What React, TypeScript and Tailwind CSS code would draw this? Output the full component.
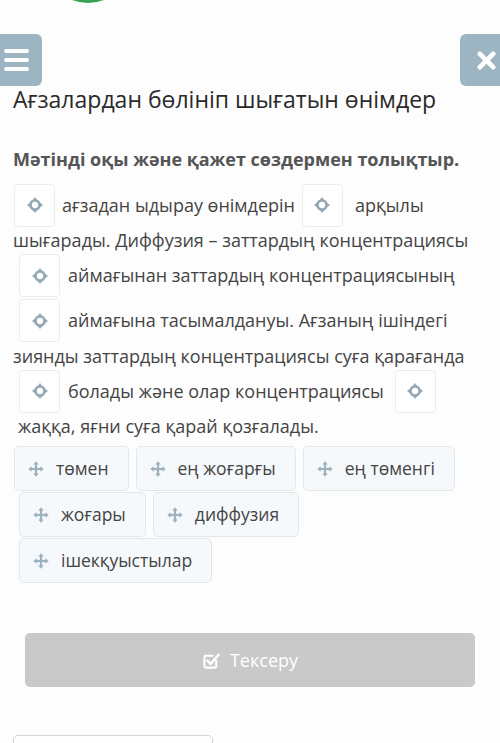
const font = { fontFamily: '"Open Sans", "Noto Sans", sans-serif' };

const DropIcon = () => (
  <svg width="18" height="18" viewBox="0 0 16 16" fill="#95a9b5">
    <circle cx="8" cy="8" r="4" fill="none" stroke="#95a9b5" strokeWidth="2.4" />
    <polygon points="8,0.8 10.2,3.8 5.8,3.8" />
    <polygon points="8,15.2 10.2,12.2 5.8,12.2" />
    <polygon points="0.8,8 3.8,5.8 3.8,10.2" />
    <polygon points="15.2,8 12.2,5.8 12.2,10.2" />
  </svg>
);

const MoveIcon = () => (
  <svg width="16" height="16" viewBox="0 0 16 16" fill="#9cb1be">
    <rect x="6.9" y="3" width="2.2" height="10" />
    <rect x="3" y="6.9" width="10" height="2.2" />
    <polygon points="8,0.3 10.8,3.6 5.2,3.6" />
    <polygon points="8,15.7 10.8,12.4 5.2,12.4" />
    <polygon points="0.3,8 3.6,5.2 3.6,10.8" />
    <polygon points="15.7,8 12.4,5.2 12.4,10.8" />
  </svg>
);

const Slot = () => (
  <span className="inline-flex w-[41px] h-[43px] shrink-0 items-center justify-center rounded-[4px] border border-[#ececec] bg-white">
    <DropIcon />
  </span>
);

const Chip = ({ label }: { label: string }) => (
  <div className="flex h-[45px] items-center gap-[12px] rounded-[5px] border border-[#e1e8ec] bg-[#f6f9fb] pl-[13px] pr-[19px] text-[17.5px] text-[#444]">
    <MoveIcon />
    <span>{label}</span>
  </div>
);

export default function App() {
  return (
    <div className="relative min-h-[743px] w-[500px] overflow-hidden bg-[#fdfdfd]" style={font}>
      <div className="absolute left-[44px] top-[-85px] h-[88px] w-[88px] rounded-full bg-[#37a357]" />

      <div className="h-[34px]" />
      <div className="flex h-[52px] items-start justify-between">
        <div className="-ml-2 flex h-[52px] w-[50px] items-center justify-start rounded-[6px] bg-[#9db4c2] pl-[12px]">
          <div className="flex flex-col gap-[5px]">
            <span className="block h-[4px] w-[25px] rounded-sm bg-white" />
            <span className="block h-[4px] w-[25px] rounded-sm bg-white" />
            <span className="block h-[4px] w-[25px] rounded-sm bg-white" />
          </div>
        </div>
        <div className="-mr-2 flex h-[52px] w-[48px] items-center justify-start rounded-[6px] bg-[#9db4c2] pl-[17px]">
          <svg width="19" height="19" viewBox="0 0 20 20">
            <path d="M3 3 L17 17 M17 3 L3 17" stroke="white" strokeWidth="5" strokeLinecap="round" />
          </svg>
        </div>
      </div>

      <h1 className="-mt-[2px] pl-[13px] text-[23px] leading-[30px] text-[#2a2a2a]">
        Ағзалардан бөлініп шығатын өнімдер
      </h1>

      <p className="mt-[33px] pl-[13px] text-[18px] font-bold leading-[24px] text-[#555]">
        Мәтінді оқы және қажет сөздермен толықтыр.
      </p>

      <div className="mt-[12px] text-[18px] text-[#444]">
        <div className="flex h-[44px] items-center pl-[14px]">
          <Slot />
          <span className="ml-[7px]">ағзадан ыдырау өнімдерін</span>
          <span className="ml-[7px]"><Slot /></span>
          <span className="ml-[12px]">арқылы</span>
        </div>
        <div className="flex h-[26px] items-center pl-[13px]">
          шығарады. Диффузия – заттардың концентрациясы
        </div>
        <div className="flex h-[45px] items-center pl-[19px]">
          <Slot />
          <span className="ml-[8px]">аймағынан заттардың концентрациясының</span>
        </div>
        <div className="flex h-[45px] items-center pl-[19px]">
          <Slot />
          <span className="ml-[8px]">аймағына тасымалдануы. Ағзаның ішіндегі</span>
        </div>
        <div className="flex h-[26px] items-center pl-[13px]">
          зиянды заттардың концентрациясы суға қарағанда
        </div>
        <div className="flex h-[44px] items-center pl-[19px]">
          <Slot />
          <span className="ml-[8px]">болады және олар концентрациясы</span>
          <span className="ml-[11px]"><Slot /></span>
        </div>
        <div className="flex h-[26px] items-center pl-[18px]">
          жаққа, яғни суға қарай қозғалады.
        </div>
      </div>

      <div className="mt-[7px] flex flex-col gap-[1px]">
        <div className="flex gap-[7px] pl-[14px]">
          <Chip label="төмен" />
          <Chip label="ең жоғарғы" />
          <Chip label="ең төменгі" />
        </div>
        <div className="flex gap-[7px] pl-[19px]">
          <Chip label="жоғары" />
          <Chip label="диффузия" />
        </div>
        <div className="flex gap-[7px] pl-[19px]">
          <Chip label="ішекқуыстылар" />
        </div>
      </div>

      <div className="mt-[50px] px-[25px]">
        <button className="flex h-[54px] w-full items-center justify-center gap-[9px] rounded-[5px] bg-[#c9c9c9] text-[18px] text-white">
          <svg width="19" height="19" viewBox="0 0 20 20" fill="none">
            <path d="M15 9.5 V16 a1.5 1.5 0 0 1 -1.5 1.5 H4 a1.5 1.5 0 0 1 -1.5 -1.5 V6.5 A1.5 1.5 0 0 1 4 5 H12" stroke="white" strokeWidth="2.2" />
            <path d="M5.5 10 L9 13.5 L17.5 4" stroke="white" strokeWidth="2.6" strokeLinecap="round" strokeLinejoin="round" />
          </svg>
          <span>Тексеру</span>
        </button>
      </div>

      <div className="ml-[13px] mt-[48px] h-[30px] w-[200px] rounded-t-[5px] border border-[#cfd6d2]" />
    </div>
  );
}
